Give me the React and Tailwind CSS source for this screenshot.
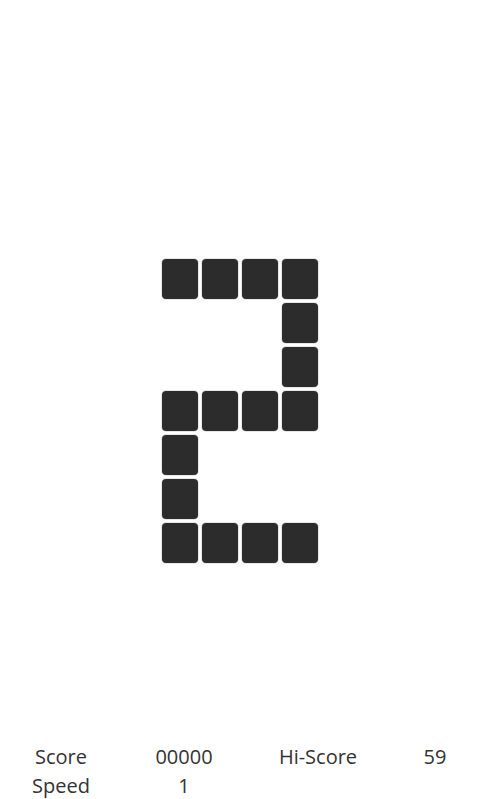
import React from "react";

const shape = [
  "XXXX",
  "...X",
  "...X",
  "XXXX",
  "X...",
  "X...",
  "XXXX",
];

function Cell({ on }) {
  if (!on) return <div className="w-[38px] h-[42px]" />;
  return (
    <div className="w-[38px] h-[42px] rounded-[5px] border border-[#e6e6e6] p-0">
      <div className="w-full h-full rounded-[4px] bg-[#2c2c2c]" />
    </div>
  );
}

export default function App() {
  return (
    <div
      className="w-[480px] h-[799px] bg-white flex flex-col text-[#333333] overflow-hidden"
      style={{ fontFamily: '"Open Sans", "Noto Sans", sans-serif' }}
    >
      <div className="flex-1 flex justify-center pt-[258px]">
        <div className="grid grid-cols-[repeat(4,38px)] gap-x-[2px] gap-y-[2px] h-fit">
          {shape.join("").split("").map((c, i) => (
            <Cell key={i} on={c === "X"} />
          ))}
        </div>
      </div>
      <div className="grid grid-cols-[122px_124px_144px_90px] text-[20px] leading-[29px] text-center mb-[-1px]">
        <div>Score</div>
        <div>00000</div>
        <div>Hi-Score</div>
        <div>59</div>
        <div>Speed</div>
        <div>1</div>
        <div></div>
        <div></div>
      </div>
    </div>
  );
}
